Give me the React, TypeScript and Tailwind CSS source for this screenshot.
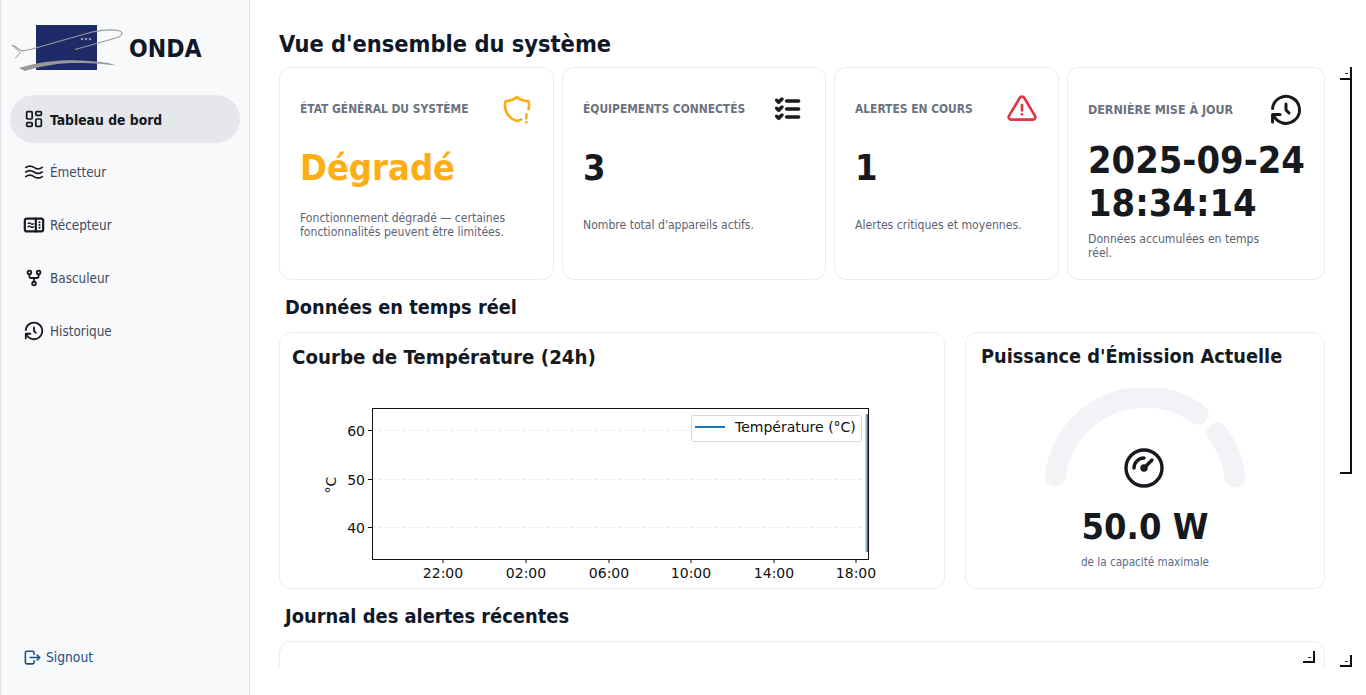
import React from 'react';
import {
  TbLayoutDashboard,
  TbRipple,
  TbGitFork,
  TbHistory,
  TbLogout,
  TbShieldExclamation,
  TbListCheck,
  TbAlertTriangle,
  TbGauge,
} from 'react-icons/tb';

const ReceiverIcon = () => (
  <svg width="22" height="22" viewBox="0 0 24 24" fill="none" stroke="#16191d" strokeWidth="2.4" strokeLinecap="round" strokeLinejoin="round">
    <rect x="2" y="5" width="20" height="14" rx="2" />
    <path d="M14 5v14" />
    <path d="M5.5 10.5c1-1 2-1 3 0s2 1 3 0M5.5 14c1-1 2-1 3 0s2 1 3 0" strokeWidth="1.5" />
    <path d="M18 9v.01M18 12v.01M18 15v.01" />
  </svg>
);

const Logo = () => (
  <svg width="115" height="50" viewBox="0 0 115 50" className="shrink-0">
    <rect x="26" y="0" width="61" height="45" fill="#1f2a68" />
    <path d="M2 20 C5 21 8 24 11 25.5 C14 26 18 25 22 24 L82 7 C92 5 103 4 110 6 C114 8 112 11 106 13 L65 24.5" fill="none" stroke="#9a9a9c" strokeWidth="1.1" />
    <path d="M2 20 C5 22 8 26 10 28 C9 30 7 32 5 33" fill="none" stroke="#9a9a9c" strokeWidth="1" />
    <path d="M9 43 L20 40 C35 36 60 34 80 36 C92 37 102 38 106 40.5 C96 39 80 37.5 60 38 C42 39 28 42 15 46 Z" fill="#98989a" />
    <circle cx="72" cy="14" r="1.3" fill="#8f93ad" />
    <circle cx="76" cy="14" r="1.3" fill="#8f93ad" />
    <circle cx="80" cy="14" r="1.3" fill="#8f93ad" />
  </svg>
);

const NavItem = ({ icon, label }: { icon: React.ReactNode; label: string }) => (
  <div className="mb-[5px] flex h-[48px] items-center gap-[5px] pl-[13px]">
    <span className="flex w-[22px] justify-center text-[#16191d]">{icon}</span>
    <span className="pt-[3px] text-[13.4px] text-[#3f4a5c]">{label}</span>
  </div>
);

const StatCard = ({ width, children }: { width: string; children: React.ReactNode }) => (
  <div className={`${width} flex h-[213px] shrink-0 flex-col rounded-[12px] border border-[#e9ecef] bg-white px-[20px]`}>
    {children}
  </div>
);

const CardHead = ({ label, icon, className }: { label: string; icon: React.ReactNode; className: string }) => (
  <div className={`flex items-center justify-between text-[11.9px] ${className}`}>
    <div className="font-bold leading-[16px] text-[#6b7280]">{label}</div>
    {icon}
  </div>
);

const Note = ({ children, className }: { children: React.ReactNode; className: string }) => (
  <div className={`text-[12.1px] leading-[14px] text-[#5c6373] ${className}`}>{children}</div>
);

const TemperatureChart = () => {
  const yTicks = [
    { v: '60', y: 41 },
    { v: '50', y: 90 },
    { v: '40', y: 138 },
  ];
  const xTicks = [
    { v: '22:00', x: 123 },
    { v: '02:00', x: 206 },
    { v: '06:00', x: 289 },
    { v: '10:00', x: 371 },
    { v: '14:00', x: 454 },
    { v: '18:00', x: 536 },
  ];
  return (
    <svg width="570" height="200" viewBox="0 0 570 200" className="ml-[40px] mt-[18px] font-['DejaVu_Sans',sans-serif]">
      {yTicks.map((t) => (
        <g key={t.v}>
          <line x1="52" x2="548" y1={t.y + 0.5} y2={t.y + 0.5} stroke="#ebebeb" strokeDasharray="4 2" />
          <line x1="48" x2="52" y1={t.y + 0.5} y2={t.y + 0.5} stroke="#111" />
          <text x="45" y={t.y + 5.5} textAnchor="end" fontSize="14" fill="#111">{t.v}</text>
        </g>
      ))}
      {xTicks.map((t) => (
        <g key={t.v}>
          <line x1={t.x} x2={t.x} y1="170" y2="174" stroke="#111" />
          <text x={t.x} y="189" textAnchor="middle" fontSize="14" fill="#111">{t.v}</text>
        </g>
      ))}
      <text transform="translate(16 96) rotate(-90)" textAnchor="middle" fontSize="14" fill="#111">°C</text>
      <line x1="547" x2="547" y1="25" y2="163" stroke="#8fbcdc" strokeWidth="3" />
      <line x1="547.5" x2="547.5" y1="25" y2="163" stroke="#1f77b4" strokeWidth="1.2" />
      <rect x="52.5" y="19.5" width="496" height="151" fill="none" stroke="#111" />
      <rect x="371.5" y="26.5" width="170" height="26" rx="2" fill="#fff" stroke="#d9d9d9" />
      <line x1="375" x2="405" y1="38" y2="38" stroke="#1f77b4" strokeWidth="2" />
      <text x="415" y="43" fontSize="14" fill="#111">Température (°C)</text>
    </svg>
  );
};

const PowerGauge = () => (
  <svg width="220" height="110" viewBox="0 0 220 110" className="mx-auto block">
    <path d="M20.3 88 A90.5 90.5 0 0 1 163 26" fill="none" stroke="#f1f3f6" strokeWidth="21" strokeLinecap="round" />
    <path d="M182 45 A90.5 90.5 0 0 1 200 89" fill="none" stroke="#f1f3f6" strokeWidth="21" strokeLinecap="round" />
  </svg>
);

export default function App() {
  return (
    <div className="relative flex h-[695px] w-[1366px] overflow-hidden bg-white font-['DejaVu_Sans_Condensed','DejaVu_Sans',sans-serif] text-[#16191d]">
      {/* Sidebar */}
      <aside className="flex h-full w-[250px] shrink-0 flex-col border-x border-[#dee2e6] bg-[#f8f9fb] px-[9px]">
        <div className="flex h-[95px] items-start pt-[25px]">
          <Logo />
          <span className="ml-[4px] mt-[8px] text-[24.5px] font-bold leading-[32px] text-[#101828]">ONDA</span>
        </div>
        <div className="mb-[5px] flex h-[48px] items-center gap-[5px] rounded-[24px] bg-[#e5e7eb] pl-[13px]">
          <span className="flex w-[22px] justify-center"><TbLayoutDashboard size={26} strokeWidth={1.9} /></span>
          <span className="pt-[2px] text-[13.8px] font-bold text-[#16191d]">Tableau de bord</span>
        </div>
        <NavItem icon={<TbRipple size={26} strokeWidth={1.8} />} label="Émetteur" />
        <NavItem icon={<ReceiverIcon />} label="Récepteur" />
        <NavItem icon={<TbGitFork size={26} />} label="Basculeur" />
        <NavItem icon={<TbHistory size={26} />} label="Historique" />
        <div className="mb-[27px] mt-auto flex items-center gap-[4px] pl-[13px] text-[#1c4f87]">
          <span className="flex w-[19px] justify-center"><TbLogout size={21} /></span>
          <span className="text-[13.7px]">Signout</span>
        </div>
      </aside>

      {/* Main content */}
      <main className="h-[667px] min-w-0 flex-1 overflow-hidden pl-[29px]">
        <h1 className="pt-[28px] text-[23.4px] font-bold leading-[32px] text-[#101828]">Vue d'ensemble du système</h1>
        <div className="mt-[7px] flex gap-[8px]">
          <StatCard width="w-[275px]">
            <CardHead className="pt-[25px]" label="ÉTAT GÉNÉRAL DU SYSTÈME" icon={<TbShieldExclamation size={32} color="#fdae14" />} />
            <div className="mt-[19px] text-[36px] font-bold leading-[48px] text-[#fdae14]">Dégradé</div>
            <Note className="mt-[19px]">Fonctionnement dégradé — certaines fonctionnalités peuvent être limitées.</Note>
          </StatCard>
          <StatCard width="w-[264px]">
            <CardHead className="pt-[25px] pr-[1px]" label="ÉQUIPEMENTS CONNECTÉS" icon={<TbListCheck size={32} strokeWidth={2.6} />} />
            <div className="mt-[19px] text-[36px] font-bold leading-[48px]">3</div>
            <Note className="mt-[26px]">Nombre total d'appareils actifs.</Note>
          </StatCard>
          <StatCard width="w-[225px]">
            <CardHead className="pt-[25px]" label="ALERTES EN COURS" icon={<TbAlertTriangle size={32} color="#e03546" />} />
            <div className="mt-[19px] text-[36px] font-bold leading-[48px]">1</div>
            <Note className="mt-[26px]">Alertes critiques et moyennes.</Note>
          </StatCard>
          <StatCard width="w-[258px]">
            <div className="flex items-center justify-between pt-[24px] text-[12.4px]">
              <div className="font-bold leading-[16px] text-[#6b7280]">DERNIÈRE MISE À JOUR</div>
              <TbHistory size={36} />
            </div>
            <div className="mt-[11px] whitespace-pre text-[37.7px] font-bold leading-[43px]">{'2025-09-24\n18:34:14'}</div>
            <Note className="mt-[7px] pr-[40px]">Données accumulées en temps réel.</Note>
          </StatCard>
        </div>

        <h2 className="ml-[6px] mt-[14px] text-[19.8px] font-bold leading-[28px] text-[#101828]">Données en temps réel</h2>
        <div className="mt-[10px] flex gap-[20px]">
          <div className="h-[257px] w-[666px] shrink-0 rounded-[12px] border border-[#e9ecef] bg-white">
            <div className="pl-[12px] pt-[10px] text-[20.3px] font-bold leading-[28px]">Courbe de Température (24h)</div>
            <TemperatureChart />
          </div>
          <div className="h-[257px] w-[360px] shrink-0 rounded-[12px] border border-[#e9ecef] bg-white">
            <div className="pl-[15px] pt-[10px] text-[19.75px] font-bold leading-[28px]">Puissance d'Émission Actuelle</div>
            <div className="relative mt-[17px]">
              <PowerGauge />
              <div className="absolute left-[154px] top-[56px]"><TbGauge size={48} strokeWidth={1.7} /></div>
            </div>
            <div className="mt-[9px] text-center text-[36px] font-bold leading-[40px]">50.0 W</div>
            <div className="mt-[7px] text-center text-[11.6px] leading-[16px] text-[#5c6b8a]">de la capacité maximale</div>
          </div>
        </div>

        <h2 className="ml-[6px] mt-[14px] text-[19.9px] font-bold leading-[28px] text-[#101828]">Journal des alertes récentes</h2>
        <div className="mt-[10px] h-[60px] w-[1046px] rounded-[12px] border border-[#e9ecef] bg-white" />
      </main>

      {/* stray resize marks over the page */}
      <div className="absolute left-[1340px] top-[78px] h-[2px] w-[11px] bg-[#111]" />
      <div className="absolute left-[1345px] top-[73px] h-[1px] w-[3px] bg-[#333]" />
      <div className="absolute left-[1340px] top-[67px] h-[407px] w-[12px] border-b-2 border-r-2 border-[#111]" />
      <div className="absolute left-[1340px] top-[655px] h-[12px] w-[12px] border-b-2 border-r-2 border-[#111]">
        <div className="absolute left-[5px] top-[6px] h-[1px] w-[3px] bg-[#333]" />
      </div>
      <div className="absolute left-[1303px] top-[651px] h-[12px] w-[12px] border-b-2 border-r-2 border-[#111]">
        <div className="absolute left-[5px] top-[6px] h-[1px] w-[3px] bg-[#333]" />
      </div>
    </div>
  );
}
